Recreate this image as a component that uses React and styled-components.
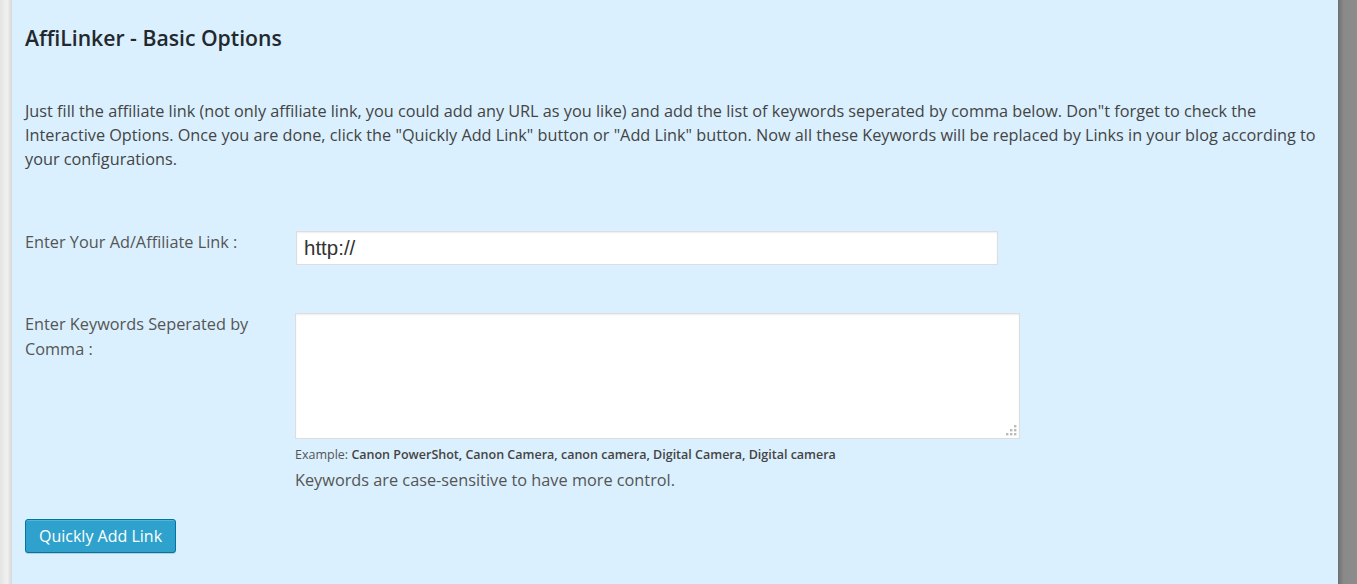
import React from 'react';
import styled, { createGlobalStyle } from 'styled-components';

const GlobalStyle = createGlobalStyle`
  html, body {
    margin: 0;
    padding: 0;
    height: 100%;
    background: #8b8b8b;
  }
  #root {
    height: 100%;
  }
`;

const Page = styled.div`
  display: flex;
  height: 584px;
  overflow: hidden;
  font-family: 'Open Sans', 'Liberation Sans', sans-serif;
`;

const LeftEdge = styled.div`
  width: 12px;
  flex: none;
  background: linear-gradient(to right, #e4e4e4, #f1f1f1 60%, #d6d6d6);
`;

const RightEdge = styled.div`
  width: 19px;
  flex: none;
  background: linear-gradient(to right, #6f6f6f, #8a8a8a 30%, #8c8c8c);
`;

const Panel = styled.div`
  flex: 1;
  background: #daf0fe;
  padding: 25px 13px 0 13px;
  color: #444;
`;

const Title = styled.h2`
  margin: 0;
  font-size: 21.2px;
  line-height: 26px;
  font-weight: 600;
  color: #23282d;
`;

const Intro = styled.p`
  margin: 48px 0 0 0;
  font-size: 16.25px;
  line-height: 24px;
  color: #444;
`;

const FormRow = styled.div`
  display: flex;
  align-items: flex-start;
  margin-top: ${p => p.$top}px;
`;

const Label = styled.label`
  width: 257px;
  flex: none;
  padding-right: 13px;
  font-size: 16.3px;
  line-height: 25px;
  color: #555;
  margin-top: ${p => p.$offset || 0}px;
`;

const Field = styled.div`
  display: flex;
  flex-direction: column;
`;

const TextInput = styled.input`
  box-sizing: border-box;
  width: 702px;
  height: 34px;
  margin-left: 1px;
  padding: 0 7px;
  border: 1px solid #ddd;
  box-shadow: inset 0 1px 2px rgba(0, 0, 0, 0.07);
  background: #fff;
  font-family: 'Liberation Sans', Arial, sans-serif;
  font-size: 20.5px;
  color: #333;
  outline: none;
`;

const AreaWrap = styled.div`
  position: relative;
  width: 725px;
  height: 126px;
`;

const TextArea = styled.textarea`
  box-sizing: border-box;
  width: 100%;
  height: 100%;
  display: block;
  border: 1px solid #ddd;
  box-shadow: inset 0 1px 2px rgba(0, 0, 0, 0.07);
  background: #fff;
  resize: none;
  outline: none;
`;

const Grip = styled.svg`
  position: absolute;
  right: 3px;
  bottom: 3px;
`;

const Example = styled.div`
  margin-top: 8px;
  font-size: 12.5px;
  line-height: 16px;
  color: #555;
  b {
    font-weight: 600;
    color: #444;
  }
`;

const Note = styled.div`
  margin-top: 6px;
  font-size: 16.3px;
  line-height: 22px;
  color: #555;
`;

const Button = styled.button`
  margin-top: 28px;
  height: 34px;
  padding: 0 13px;
  background: #2ea2cc;
  border: 1px solid #0074a2;
  border-radius: 3px;
  box-shadow: inset 0 1px 0 rgba(120, 200, 230, 0.5), 0 1px 0 rgba(0, 0, 0, 0.15);
  color: #fff;
  font-family: 'Open Sans', 'Liberation Sans', sans-serif;
  font-size: 16px;
  cursor: pointer;
`;

function ResizeGrip() {
  const dots = [[9, 1], [5, 5], [9, 5], [1, 9], [5, 9], [9, 9]];
  return (
    <Grip width="12" height="12" viewBox="0 0 12 12">
      {dots.map(([x, y]) => (
        <rect key={x + '-' + y} x={x} y={y} width="2.4" height="2.4" fill="#bbb" />
      ))}
    </Grip>
  );
}

export default function App() {
  return (
    <>
      <GlobalStyle />
      <Page>
        <LeftEdge />
        <Panel>
          <Title>AffiLinker - Basic Options</Title>
          <Intro>
            Just fill the affiliate link (not only affiliate link, you could add any URL as you like) and add the list of keywords seperated by comma below. Don"t forget to check the Interactive Options. Once you are done, click the "Quickly Add Link" button or "Add Link" button. Now all these Keywords will be replaced by Links in your blog according to your configurations.
          </Intro>
          <FormRow $top={60}>
            <Label $offset={-1}>Enter Your Ad/Affiliate Link :</Label>
            <TextInput defaultValue="http://" />
          </FormRow>
          <FormRow $top={48}>
            <Label $offset={-1}>Enter Keywords Seperated by Comma :</Label>
            <Field>
              <AreaWrap>
                <TextArea />
                <ResizeGrip />
              </AreaWrap>
              <Example>
                Example: <b>Canon PowerShot, Canon Camera, canon camera, Digital Camera, Digital camera</b>
              </Example>
              <Note>Keywords are case-sensitive to have more control.</Note>
            </Field>
          </FormRow>
          <Button>Quickly Add Link</Button>
        </Panel>
        <RightEdge />
      </Page>
    </>
  );
}
